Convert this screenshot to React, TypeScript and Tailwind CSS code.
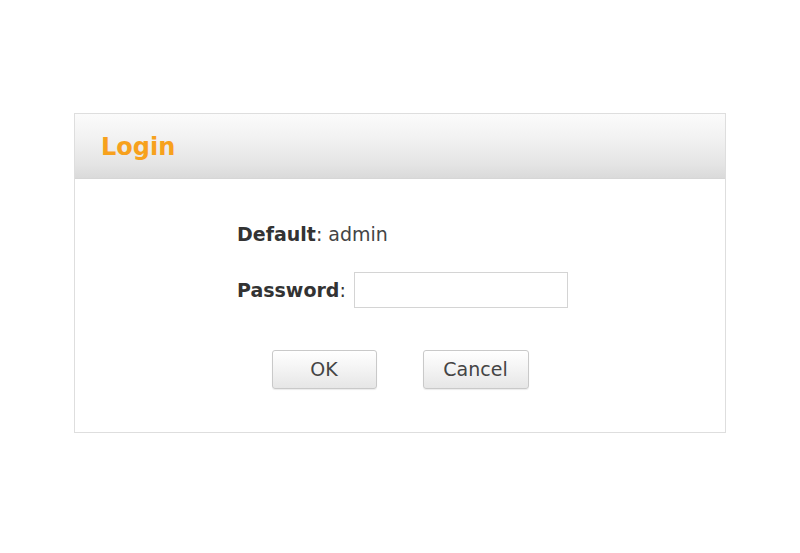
export default function App() {
  return (
    <div className="min-h-[553px] w-full bg-white pt-[113px] font-['DejaVu_Sans',sans-serif]">
      <div className="mx-auto w-[652px] border border-[#dedede] bg-white">
        {/* header */}
        <div className="flex h-[65px] items-center border-b border-[#d6d6d6] bg-[linear-gradient(#fbfbfb,#f1f1f1_40%,#e4e4e4_80%,#dadada)] pl-[26px]">
          <h1 className="mt-[2px] text-[24px] font-bold text-[#f7a11d]">Login</h1>
        </div>

        {/* body */}
        <div className="pt-[44px] pb-[43px]">
          <div className="pl-[162px]">
            <p className="text-[19px] leading-[22px] text-[#444]">
              <span className="font-bold text-[#333]">Default</span>: admin
            </p>
            <div className="mt-[27px] flex items-center">
              <label className="text-[19px] leading-[22px] text-[#333]">
                <span className="font-bold">Password</span>:
              </label>
              <input
                type="password"
                className="ml-[8px] h-[36px] w-[214px] border border-[#d4d4d4] bg-white px-2 text-[16px] outline-none"
              />
            </div>
          </div>
          <div className="mt-[42px] flex justify-center gap-[46px]">
            <button className="h-[39px] w-[105px] rounded-[3px] border border-[#c9c9c9] bg-[linear-gradient(#ffffff,#f3f3f3_50%,#e6e6e6)] text-[19px] text-[#444] shadow-[0_1px_1px_rgba(0,0,0,0.08)]">
              OK
            </button>
            <button className="h-[39px] w-[106px] rounded-[3px] border border-[#c9c9c9] bg-[linear-gradient(#ffffff,#f3f3f3_50%,#e6e6e6)] text-[19px] text-[#444] shadow-[0_1px_1px_rgba(0,0,0,0.08)]">
              Cancel
            </button>
          </div>
        </div>
      </div>
    </div>
  );
}
